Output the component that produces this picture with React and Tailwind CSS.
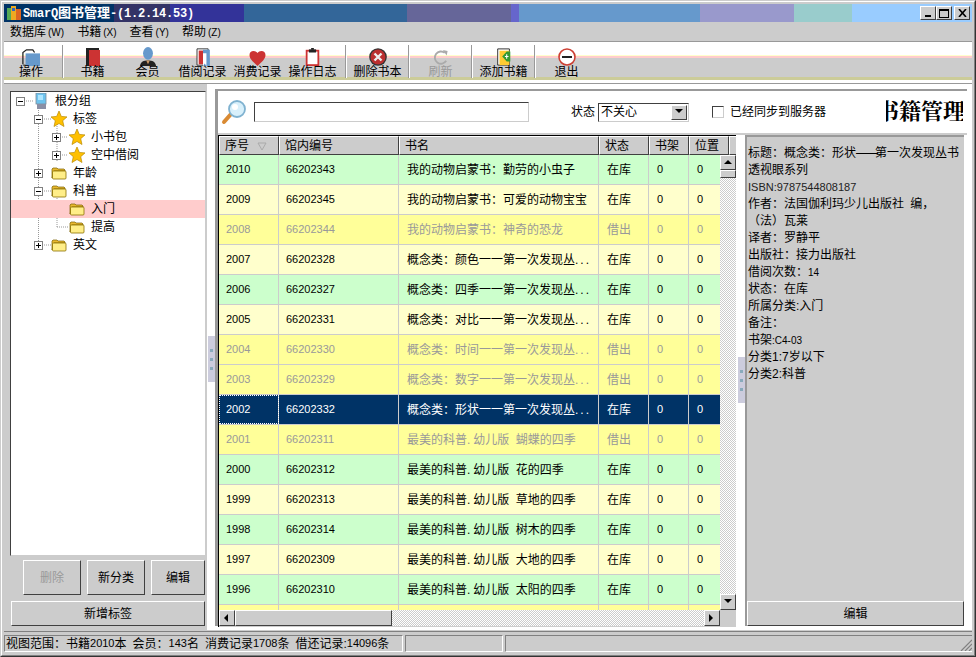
import React from "react";

const sans = "font-['Liberation_Sans','Noto_Sans_CJK_SC',sans-serif]";
const raised = "border border-t-white border-l-white border-r-[#404040] border-b-[#404040] bg-[#cccccc]";
const sunken = "border border-t-[#404040] border-l-[#404040] border-r-[#cccccc] border-b-[#cccccc] bg-white";

const Book = () => (
  <svg width="14" height="18" viewBox="0 0 14 18"><path d="M0 0h13v2H3v16H0z" fill="#222"/><rect x="3" y="2" width="11" height="16" fill="#cc3333"/></svg>
);
const FolderTool = () => (
  <svg width="18" height="18" viewBox="0 0 20 20"><path d="M1 18V5l4-3h7l2 3" fill="none" stroke="#222" strokeWidth="1.4"/><rect x="4" y="6" width="16" height="14" fill="#6699cc"/><path d="M1 19h3" stroke="#222"/></svg>
);
const Member = () => (
  <svg width="18" height="19" viewBox="0 0 20 21"><ellipse cx="10" cy="7" rx="5.500" ry="7" fill="#6699cc"/><path d="M1 21c1-5 4-6 9-6s8 1 9 6z" fill="#222"/><path d="M8 15h4l-2 4z" fill="#cc9966"/></svg>
);
const Borrow = () => (
  <svg width="14" height="18" viewBox="0 0 16 21"><path d="M1 1h13v19H1z" fill="#fff" stroke="#222"/><rect x="3" y="3" width="5" height="16" fill="#cc3333"/><rect x="8" y="2" width="8" height="19" fill="#6699cc"/><path d="M8 6h4v15l-2-3-2 3z" fill="#fff"/></svg>
);
const Heart = () => (
  <svg width="19" height="16" viewBox="0 0 20 18"><path d="M10 18C5 13 1 10 1 5.500 1 2.500 3 1 5.500 1 7.500 1 9 2 10 3.500 11 2 12.500 1 14.500 1 17 1 19 2.500 19 5.500 19 10 15 13 10 18z" fill="#cc3333"/></svg>
);
const Clip = () => (
  <svg width="15" height="18" viewBox="0 0 16 20"><rect x="1.500" y="3" width="13" height="16" fill="#fff" stroke="#cc3333" strokeWidth="2"/><rect x="4" y="1.500" width="8" height="3.500" fill="#222"/><rect x="6.500" y="0" width="3" height="2" fill="#222"/></svg>
);
const Del = () => (
  <svg width="18" height="18" viewBox="0 0 18 18"><circle cx="9" cy="9" r="8.800" fill="#333"/><circle cx="9" cy="9" r="7.500" fill="#bb2f2f"/><path d="M5.500 5.500l7 7M12.500 5.500l-7 7" stroke="#eee" strokeWidth="2.400"/></svg>
);
const Refresh = () => (
  <svg width="18" height="17" viewBox="0 0 18 18"><path d="M14.500 12.500A6.500 6.500 0 1 1 13 4" fill="none" stroke="#aaa" strokeWidth="2"/><path d="M11 1l5 1-1 5z" fill="#aaa"/></svg>
);
const AddBook = () => (
  <svg width="16" height="18" viewBox="0 0 16 20"><path d="M1 1h13v18H1z" fill="#fff" stroke="#222"/><rect x="3" y="3" width="11" height="16" fill="#ffcc33"/><path d="M15 4v11H11L6 9.500 11 4z" fill="#339933"/><path d="M11 7v5M9 9.500h4" stroke="#fff" strokeWidth="1.200"/></svg>
);
const Exit = () => (
  <svg width="18" height="18" viewBox="0 0 18 18"><circle cx="9" cy="9" r="8" fill="#fff" stroke="#cc3f33" strokeWidth="1.600"/><rect x="4" y="8" width="10" height="2" fill="#222"/></svg>
);
const Star = () => (
  <svg width="18" height="18" viewBox="0 0 18 18"><path d="M9 1l2.300 5.400 5.700.5-4.300 3.800 1.300 5.800L9 13.500l-5 3 1.300-5.800L1 6.900l5.700-.5z" fill="#ffc000" stroke="#b98a00" strokeWidth=".7"/></svg>
);
const Folder = () => (
  <svg width="16" height="14" viewBox="0 0 16 14"><path d="M1 12V3l1-1h4l1 1h6l1 1v1H3z" fill="#e8b830" stroke="#7a6000" strokeWidth=".7"/><rect x="1.500" y="5" width="13.500" height="8" rx="1" fill="#ffee88" stroke="#8a7000" strokeWidth=".8"/></svg>
);
const Computer = () => (
  <svg width="12" height="17" viewBox="0 0 12 17"><rect x="1" y="0" width="10" height="11" fill="#6ec3ee" stroke="#7b8b99" strokeWidth=".8"/><rect x="2" y="11" width="9" height="5" fill="#8a8fa5"/><path d="M3 2h5v5H3z" fill="#aee6ff"/></svg>
);
const Magnifier = () => (
  <svg width="26" height="26" viewBox="0 0 26 26"><path d="M3 23l7-8" stroke="#d98a33" strokeWidth="4" strokeLinecap="round"/><circle cx="16" cy="10" r="8" fill="#d8f0fb" stroke="#7fb2d0" strokeWidth="1.800"/><circle cx="14" cy="8" r="3" fill="#fff"/></svg>
);

const toolItems = [
  { w: "w-[58px] pr-[4px]", label: "操作", icon: <FolderTool />, sep: true },
  { w: "w-[56px] pl-[1px]", label: "书籍", icon: <Book /> },
  { w: "w-[55px]", label: "会员", icon: <Member /> },
  { w: "w-[55px]", label: "借阅记录", icon: <Borrow /> },
  { w: "w-[55px]", label: "消费记录", icon: <Heart /> },
  { w: "w-[60px] pr-[5px]", label: "操作日志", icon: <Clip />, sep: true },
  { w: "w-[61px]", label: "删除书本", icon: <Del />, sep: true },
  { w: "w-[61px]", label: "刷新", icon: <Refresh />, sep: true, off: true },
  { w: "w-[61px]", label: "添加书籍", icon: <AddBook />, sep: true },
  { w: "w-[61px]", label: "退出", icon: <Exit /> },
];

const bars = [
  ["w-[110px]", "bg-[#003366]"], ["w-[56px]", "bg-[#333366]"], ["w-[74px]", "bg-[#333399]"], ["w-[163px]", "bg-[#336699]"],
  ["w-[104px]", "bg-[#666699]"], ["w-[8px]", "bg-[#6666cc]"], ["w-[181px]", "bg-[#6699cc]"], ["w-[94px]", "bg-[#9999cc]"],
  ["w-[58px]", "bg-[#99cccc]"], ["w-[120px]", "bg-[#99ccff]"],
];

const rows = [
  ["2010", "66202343", "我的动物启蒙书：勤劳的小虫子", "在库", "g"],
  ["2009", "66202345", "我的动物启蒙书：可爱的动物宝宝", "在库", "p"],
  ["2008", "66202344", "我的动物启蒙书：神奇的恐龙", "借出", "y"],
  ["2007", "66202328", "概念类：颜色一一第一次发现丛...", "在库", "p"],
  ["2006", "66202327", "概念类：四季一一第一次发现丛...", "在库", "g"],
  ["2005", "66202331", "概念类：对比一一第一次发现丛...", "在库", "p"],
  ["2004", "66202330", "概念类：时间一一第一次发现丛...", "借出", "y"],
  ["2003", "66202329", "概念类：数字一一第一次发现丛...", "借出", "y"],
  ["2002", "66202332", "概念类：形状一一第一次发现丛...", "在库", "s"],
  ["2001", "66202311", "最美的科普.幼儿版 蝴蝶的四季", "借出", "y"],
  ["2000", "66202312", "最美的科普.幼儿版 花的四季", "在库", "g"],
  ["1999", "66202313", "最美的科普.幼儿版 草地的四季", "在库", "p"],
  ["1998", "66202314", "最美的科普.幼儿版 树木的四季", "在库", "g"],
  ["1997", "66202309", "最美的科普.幼儿版 大地的四季", "在库", "p"],
  ["1996", "66202310", "最美的科普.幼儿版 太阳的四季", "在库", "g"],
];

const rowStyle = {
  g: "bg-[#ccffcc] text-black",
  p: "bg-[#ffffcc] text-black",
  y: "bg-[#ffff99] text-[#999999]",
  s: "bg-[#003366] text-white",
};

const Arrow = ({ d }) => {
  const map = { up: "0,5 8,5 4,1", down: "0,1 8,1 4,5", left: "5,0 5,8 1,4", right: "1,0 1,8 5,4" };
  return <svg width="8" height="8" viewBox="0 0 8 8"><polygon points={map[d]} fill="#000" /></svg>;
};
const SB = ({ d, cls }) => (
  <div className={`${raised} ${cls} flex items-center justify-center shrink-0`}><Arrow d={d} /></div>
);
const checker = "bg-[repeating-conic-gradient(#cccccc_0_25%,#ffffff_0_50%)] bg-[length:2px_2px]";

const Expander = ({ open }) => (
  <div className="w-[9px] h-[9px] border border-[#808080] bg-white flex items-center justify-center relative shrink-0">
    <div className="w-[5px] h-px bg-black" />
    {!open && <div className="absolute w-px h-[5px] bg-black left-[3px] top-[1px]" />}
  </div>
);

const TreeRow = ({ indent, exp, icon, text, sel }) => (
  <div className={`h-[18px] flex items-center text-[12px] text-black relative ${sel ? "bg-[#ffcccc]" : ""} ${indent}`}>
    <div className="w-[9px] shrink-0 flex items-center">{exp !== undefined && <Expander open={exp} />}</div>
    <div className="w-[22px] ml-[5px] shrink-0 flex justify-center">{icon}</div>
    <span className="ml-[3px]">{text}</span>
  </div>
);

const Handle = ({ cls }) => (
  <div className={`absolute ${cls} w-[7px] h-[46px] bg-[#ccccdd] flex flex-col items-center justify-center gap-[6px]`}>
    <div className="w-[3px] h-[3px] bg-[#88aabb]" />
    <div className="w-[3px] h-[3px] bg-[#88aabb]" />
    <div className="w-[3px] h-[3px] bg-[#88aabb]" />
  </div>
);

const MenuItem = ({ t, k }) => (
  <span className="whitespace-nowrap">{t}<span className="ml-[2px] text-[10px]">({k})</span></span>
);

const Name = ({ t }) => {
  if (t.endsWith("...")) {
    return <span>{t.slice(0, -3)}<span className="tracking-[2px]">...</span></span>;
  }
  if (t.includes(".")) {
    const [a, b] = t.split(".");
    return <span className="[word-spacing:3px]">{a}.<span className="ml-[3px]">{b}</span></span>;
  }
  return <span>{t}</span>;
};

export default function App() {
  return (
    <div className={`w-[976px] h-[657px] border border-t-[#cccccc] border-l-[#cccccc] border-r-[#333333] border-b-[#333333] bg-[#cccccc] overflow-hidden ${sans}`}>
      <div className="w-full h-full border border-t-white border-l-white border-r-[#808080] border-b-[#808080] p-[2px] flex flex-col">
        {/* title bar */}
        <div className="h-[18px] flex relative shrink-0">
          {bars.map(([w, c], i) => <div key={i} className={`${w} ${c} h-full`} />)}
          <div className="absolute left-0 top-0 h-full flex items-center">
            <svg className="ml-[2px]" width="16" height="16" viewBox="0 0 16 16"><rect x="1" y="3" width="4" height="12" fill="#55aa55"/><rect x="5" y="1" width="5" height="14" fill="#eeaa22"/><rect x="10" y="4" width="5" height="11" fill="#dd6622"/><rect x="6" y="3" width="3" height="3" fill="#3366bb"/></svg>
            <span className="ml-[1px] text-white font-bold text-[12px] font-['Liberation_Mono','Noto_Sans_CJK_SC',monospace] tracking-[-0.2px] whitespace-nowrap leading-[18px]">SmarQ<span className="text-[13px] tracking-normal font-['Noto_Sans_CJK_SC',sans-serif]">图书管理</span>-(1.2.14.53)</span>
          </div>
          <div className="absolute right-[2px] top-[2px] flex">
            <div className={`${raised} w-[16px] h-[14px] flex items-end justify-center pb-[2px]`}><div className="w-[6px] h-[2px] bg-black" /></div>
            <div className={`${raised} w-[16px] h-[14px] flex items-center justify-center`}><div className="w-[10px] h-[9px] border border-t-2 border-black" /></div>
            <div className={`${raised} w-[16px] h-[14px] ml-[2px] flex items-center justify-center`}>
              <svg width="9" height="8" viewBox="0 0 9 8"><path d="M1 0l7 8M8 0L1 8" stroke="#000" strokeWidth="1.600"/></svg>
            </div>
          </div>
        </div>
        {/* menu */}
        <div className="h-[20px] flex items-center text-[12px] text-black shrink-0 pl-[6px] gap-[13px] border-b border-b-[#999999]">
          <MenuItem t="数据库" k="W" /><MenuItem t="书籍" k="X" /><MenuItem t="查看" k="Y" /><MenuItem t="帮助" k="Z" />
        </div>
        {/* toolbar */}
        <div className="h-[38px] shrink-0 flex bg-[linear-gradient(#ffffff_0_13px,#ffffcc_13px_14px,#ffcccc_14px_16px,#cccccc_16px_35px,#cccc99_35px_38px)]">
          {toolItems.map((t, i) => (
            <React.Fragment key={i}>
              <div className={`${t.w} h-full flex flex-col items-center shrink-0`}>
                <div className="h-[24px] flex items-end">{t.icon}</div>
                <span className={`text-[12px] leading-[13px] whitespace-nowrap ${t.off ? "text-[#999999]" : "text-black"}`}>{t.label}</span>
              </div>
              {t.sep && <div className="w-[2px] h-[33px] mt-[3px] shrink-0 border-l border-l-[#999999] bg-white" />}
            </React.Fragment>
          ))}
        </div>
        <div className="h-[4px] shrink-0 bg-white border-b border-b-[#999999]" />
        {/* content */}
        <div className="h-[546px] shrink-0 flex bg-white relative">
          {/* left */}
          <div className="w-[204px] shrink-0 bg-[#cccccc] flex flex-col pl-[6px] pr-[1px] pt-[7px] pb-[4px] border-r border-r-white">
            <div className={`${sunken} h-[465px] relative`}>
              <svg className="absolute left-0 top-0" width="60" height="170" viewBox="0 0 60 170">
                <g stroke="#999" strokeDasharray="1 1" fill="none">
                  <path d="M15 9h7M27.500 14v138M33 27h7M33 99h7M33 117h7M33 153h7M46 32v38M51 45h6M51 63h6M46 104v32M46 117h12M46 135h12"/>
                </g>
              </svg>
              <div className="relative">
                <TreeRow indent="pl-[5px]" exp={true} icon={<Computer />} text="根分组" />
                <TreeRow indent="pl-[23px]" exp={true} icon={<Star />} text="标签" />
                <TreeRow indent="pl-[41px]" exp={false} icon={<Star />} text="小书包" />
                <TreeRow indent="pl-[41px]" exp={false} icon={<Star />} text="空中借阅" />
                <TreeRow indent="pl-[23px]" exp={false} icon={<Folder />} text="年龄" />
                <TreeRow indent="pl-[23px]" exp={true} icon={<Folder />} text="科普" />
                <TreeRow indent="pl-[41px]" icon={<Folder />} text="入门" sel />
                <TreeRow indent="pl-[41px]" icon={<Folder />} text="提高" />
                <TreeRow indent="pl-[23px]" exp={false} icon={<Folder />} text="英文" />
              </div>
            </div>
            <div className="flex gap-[6px] mt-[4px] ml-[13px] text-[12px] text-black">
              <div className={`${raised} w-[58px] h-[35px] flex items-center justify-center text-[#999999]`}>删除</div>
              <div className={`${raised} w-[58px] h-[35px] flex items-center justify-center`}>新分类</div>
              <div className={`${raised} w-[54px] h-[35px] flex items-center justify-center`}>编辑</div>
            </div>
            <div className={`${raised} h-[25px] mt-[6px] ml-[1px] mr-[1px] flex items-center justify-center text-[12px] text-black`}>新增标签</div>
          </div>
          <Handle cls="left-[204px] top-[252px]" />
          <div className="w-[7px] shrink-0 bg-white" />
          {/* main */}
          <div className="w-[752px] shrink-0 flex flex-col pt-[5px] pb-[4px]">
            <div className="flex-1 flex flex-col border-l-[3px] border-l-[#999999] border-t-2 border-t-[#999999] min-h-0">
              {/* search bar */}
              <div className="h-[44px] shrink-0 flex items-center border-b-2 border-b-[#cccccc] text-[12px] text-black">
                <div className="ml-[3px]"><Magnifier /></div>
                <div className={`${sunken} ml-[7px] w-[275px] h-[20px]`} />
                <span className="ml-[42px]">状态</span>
                <div className={`${sunken} ml-[3px] w-[91px] h-[19px] flex items-center pl-[2px] pr-[1px]`}>
                  <span className="flex-1">不关心</span>
                  <div className={`${raised} w-[16px] h-[15px] flex items-center justify-center`}><Arrow d="down" /></div>
                </div>
                <div className="ml-[23px] w-[12px] h-[12px] border border-t-[#404040] border-l-[#404040] border-r-[#cccccc] border-b-[#cccccc] bg-white shrink-0" />
                <span className="ml-[6px] whitespace-nowrap">已经同步到服务器</span>
                <div className="ml-auto mr-[4px] w-[77px] overflow-hidden -mt-[4px]">
                  <div className="-ml-[9px] text-[22px] leading-[26px] font-bold whitespace-nowrap font-['Noto_Serif_CJK_SC','Noto_Sans_CJK_SC',serif]">书籍管理</div>
                </div>
              </div>
              <div className="flex-1 min-h-0 flex">
                {/* grid */}
                <div className="w-[518px] h-[492px] shrink-0 border-t border-l border-t-black border-l-black flex flex-col bg-[#cccccc]">
                  <div className="h-[19px] shrink-0 flex overflow-hidden text-[12px] text-black">
                    {[["w-[60px]", "序号"], ["w-[120px]", "馆内编号"], ["w-[200px]", "书名"], ["w-[50px]", "状态"], ["w-[40px]", "书架"], ["w-[40px]", "位置"], ["w-[20px]", ""]].map(([w, t], i) => (
                      <div key={i} className={`${w} shrink-0 h-full border-r border-r-[#404040] border-b border-b-[#404040] border-l border-l-white border-t border-t-white pl-[5px] flex items-center relative`}>
                        {t}
                        {i === 0 && <svg className="absolute right-[11px] top-[5px]" width="10" height="9" viewBox="0 0 10 9"><path d="M1 1h8L5 8z" fill="none" stroke="#aaa"/></svg>}
                      </div>
                    ))}
                  </div>
                  <div className="flex-1 min-h-0 flex">
                    <div className="w-[501px] shrink-0 overflow-hidden bg-white">
                      {rows.map((r, i) => (
                        <div key={i} className={`h-[30px] flex border-b border-b-[#cccccc] ${rowStyle[r[4]]}`}>
                          <div className={`w-[60px] shrink-0 border-r border-r-[#cccccc] pl-[7px] text-[11px] flex items-center ${r[4] === "s" ? "outline-1 outline-dotted -outline-offset-1 outline-white" : ""}`}>{r[0]}</div>
                          <div className="w-[120px] shrink-0 border-r border-r-[#cccccc] pl-[7px] text-[11px] flex items-center">{r[1]}</div>
                          <div className="w-[200px] shrink-0 border-r border-r-[#cccccc] pl-[8px] text-[12px] flex items-center whitespace-nowrap overflow-hidden"><Name t={r[2]} /></div>
                          <div className="w-[50px] shrink-0 border-r border-r-[#cccccc] pl-[8px] text-[12px] flex items-center">{r[3]}</div>
                          <div className="w-[40px] shrink-0 border-r border-r-[#cccccc] pl-[8px] text-[11px] flex items-center">0</div>
                          <div className="w-[40px] shrink-0 pl-[8px] text-[11px] flex items-center">0</div>
                        </div>
                      ))}
                      <div className="h-[5px] flex bg-[#ffff99]">
                        <div className="w-[60px] border-r border-r-[#cccccc]" />
                        <div className="w-[120px] border-r border-r-[#cccccc]" />
                        <div className="w-[200px] border-r border-r-[#cccccc]" />
                        <div className="w-[50px] border-r border-r-[#cccccc]" />
                        <div className="w-[40px] border-r border-r-[#cccccc]" />
                      </div>
                    </div>
                    <div className={`w-[16px] shrink-0 flex flex-col ${checker}`}>
                      <SB d="up" cls="w-[16px] h-[15px]" />
                      <div className={`${raised} w-[16px] h-[8px]`} />
                      <div className="flex-1" />
                      <SB d="down" cls="w-[16px] h-[16px]" />
                    </div>
                  </div>
                  <div className="h-[17px] shrink-0 flex">
                    <SB d="left" cls="w-[16px] h-[16px]" />
                    <div className={`${raised} w-[157px] h-[16px] shrink-0`} />
                    <div className={`w-[312px] h-[16px] shrink-0 ${checker}`} />
                    <SB d="right" cls="w-[16px] h-[16px]" />
                  </div>
                </div>
                {/* info */}
                <div className="ml-[9px] w-[219px] shrink-0 flex flex-col border-l-2 border-t-2 border-l-[#999999] border-t-[#999999] bg-[#cccccc]">
                  <div className="flex-1 pt-[8px] pl-[1px] text-[12px] leading-[17px] text-black">
                    <div className="whitespace-nowrap">标题：概念类：形状<span className="tracking-[-2px] mr-[-1px]">——</span>第一次发现丛书</div>
                    <div>透视眼系列</div>
                    <div className="text-[11px] text-[#222222]">ISBN:9787544808187</div>
                    <div className="whitespace-nowrap [word-spacing:3px]">作者：法国伽利玛少儿出版社 编，</div>
                    <div>（法）瓦莱</div>
                    <div>译者：罗静平</div>
                    <div>出版社：接力出版社</div>
                    <div>借阅次数：<span className="text-[10px]">14</span></div>
                    <div>状态：在库</div>
                    <div>所属分类:入门</div>
                    <div>备注：</div>
                    <div>书架<span className="text-[10px]">:C4-03</span></div>
                    <div>分类1:7岁以下</div>
                    <div>分类2:科普</div>
                  </div>
                  <div className={`${raised} h-[25px] flex items-center justify-center text-[12px] text-black`}>编辑</div>
                </div>
              </div>
            </div>
          </div>
          <Handle cls="left-[734px] top-[273px]" />
        </div>
        {/* status */}
        <div className="flex-1 min-h-0 mt-[1px] border-t border-t-[#808080] pt-[3px] flex text-[12px] text-black gap-[2px]">
          <div className="w-[399px] h-[17px] border border-t-[#808080] border-l-[#808080] border-r-white border-b-white flex items-center pl-[1px] whitespace-nowrap">
            视图范围：书籍<span className="text-[11px]">2010</span>本
            <span className="ml-[6px]">会员：</span><span className="text-[11px]">143</span>名
            <span className="ml-[6px]">消费记录</span><span className="text-[11px]">1708</span>条
            <span className="ml-[6px]">借还记录:</span><span className="text-[11px]">14096</span>条
          </div>
          <div className="w-[98px] h-[17px] border border-t-[#808080] border-l-[#808080] border-r-white border-b-white" />
          <div className="flex-1 h-[17px] border-t border-l border-b border-t-[#808080] border-l-[#808080] border-b-white relative">
            <svg className="absolute right-0 bottom-0" width="12" height="12" viewBox="0 0 12 12"><path d="M12 1L1 12M12 5L5 12M12 9L9 12" stroke="#808080" strokeWidth="1.200"/></svg>
          </div>
        </div>
      </div>
    </div>
  );
}
